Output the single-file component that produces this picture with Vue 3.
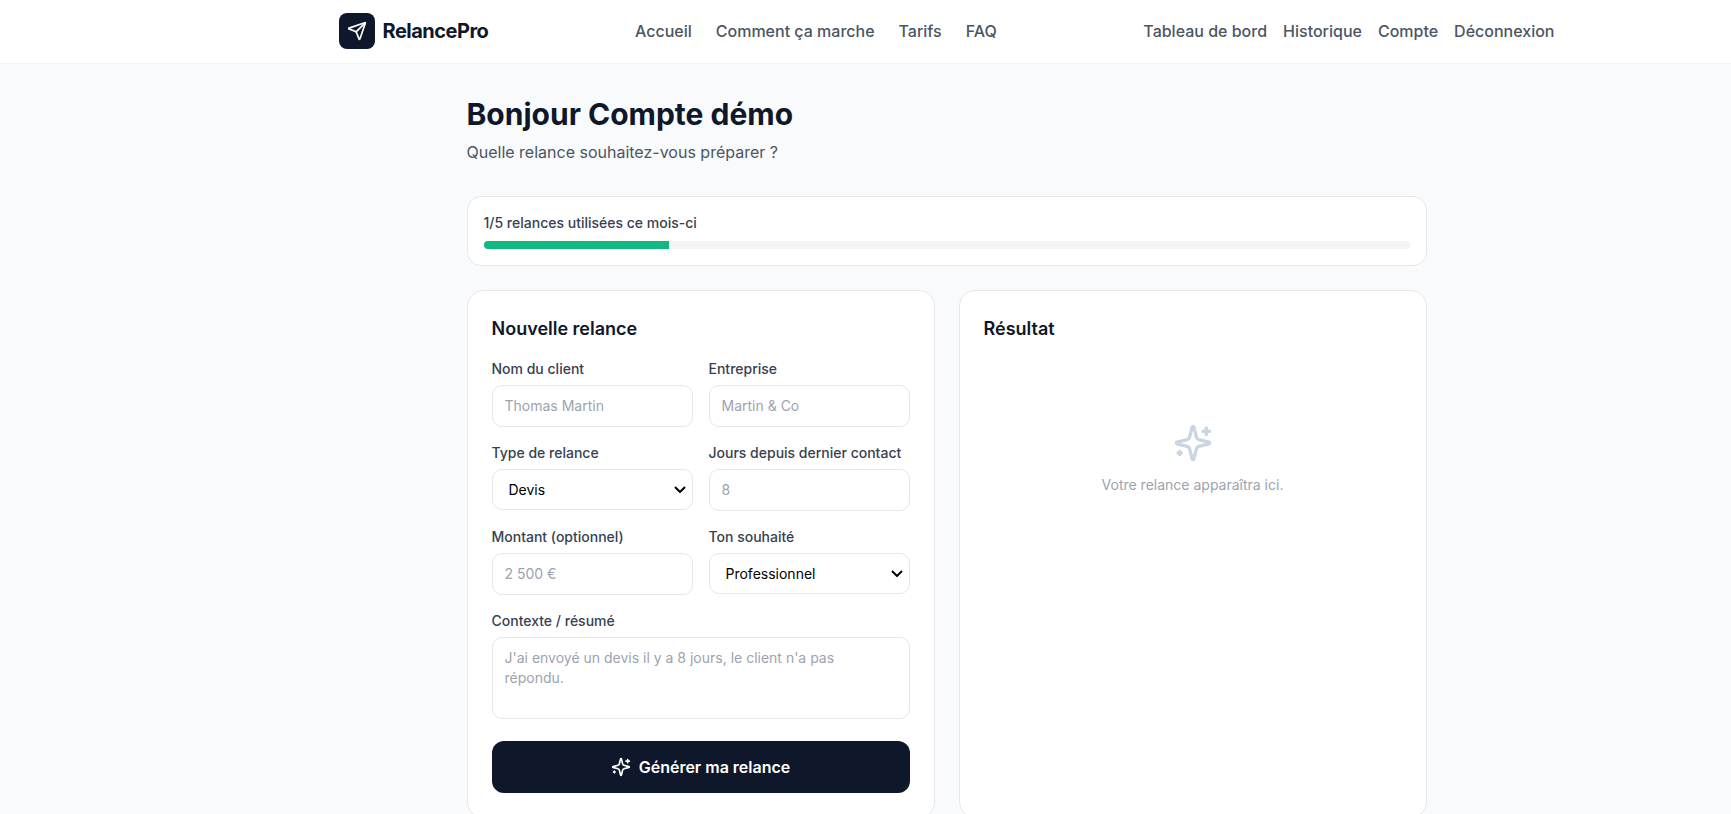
<template>
  <div class="page">
    <header class="topbar">
      <nav class="nav">
        <a class="brand" href="#">
          <span class="brand-icon">
            <svg viewBox="0 0 24 24" width="20" height="20" fill="none" stroke="#fff" stroke-width="2" stroke-linecap="round" stroke-linejoin="round">
              <path d="M14.536 21.686a.5.5 0 0 0 .937-.024l6.5-19a.496.496 0 0 0-.635-.635l-19 6.5a.5.5 0 0 0-.024.937l7.93 3.18a2 2 0 0 1 1.112 1.11z" />
              <path d="m21.854 2.147-10.94 10.939" />
            </svg>
          </span>
          <span class="brand-name">RelancePro</span>
        </a>
        <div class="links links-main">
          <a v-for="link in mainLinks" :key="link" href="#">{{ link }}</a>
        </div>
        <div class="links links-account">
          <a v-for="link in accountLinks" :key="link" href="#">{{ link }}</a>
        </div>
      </nav>
    </header>

    <main class="content">
      <h1>Bonjour Compte démo</h1>
      <p class="subtitle">Quelle relance souhaitez-vous préparer ?</p>

      <section class="usage">
        <div class="usage-label">{{ used }}/{{ quota }} relances utilisées ce mois-ci</div>
        <div class="usage-track">
          <div class="usage-fill" :style="{ width: usagePercent + '%' }"></div>
        </div>
      </section>

      <div class="columns">
        <section class="card">
          <h2>Nouvelle relance</h2>
          <form class="form" @submit.prevent>
            <div class="field">
              <label>Nom du client</label>
              <input type="text" placeholder="Thomas Martin" />
            </div>
            <div class="field">
              <label>Entreprise</label>
              <input type="text" placeholder="Martin &amp; Co" />
            </div>
            <div class="field">
              <label>Type de relance</label>
              <div class="select-wrap">
                <select>
                  <option>Devis</option>
                  <option>Facture</option>
                </select>
                <svg class="chevron" viewBox="0 0 12 7" width="12" height="7" fill="none" stroke="#000" stroke-width="2">
                  <path d="M1 1l5 5 5-5" />
                </svg>
              </div>
            </div>
            <div class="field">
              <label>Jours depuis dernier contact</label>
              <input type="text" placeholder="8" />
            </div>
            <div class="field">
              <label>Montant (optionnel)</label>
              <input type="text" placeholder="2 500 €" />
            </div>
            <div class="field">
              <label>Ton souhaité</label>
              <div class="select-wrap">
                <select>
                  <option>Professionnel</option>
                  <option>Amical</option>
                </select>
                <svg class="chevron" viewBox="0 0 12 7" width="12" height="7" fill="none" stroke="#000" stroke-width="2">
                  <path d="M1 1l5 5 5-5" />
                </svg>
              </div>
            </div>
            <div class="field field-wide">
              <label>Contexte / résumé</label>
              <textarea rows="3" placeholder="J'ai envoyé un devis il y a 8 jours, le client n'a pas répondu."></textarea>
            </div>
            <button class="submit" type="submit">
              <svg viewBox="0 0 24 24" width="20" height="20" fill="none" stroke="currentColor" stroke-width="2" stroke-linecap="round" stroke-linejoin="round">
                <path :d="sparkle" />
                <path d="M20 3v4M22 5h-4M4 17v2M5 18H3" />
              </svg>
              Générer ma relance
            </button>
          </form>
        </section>

        <section class="card">
          <h2>Résultat</h2>
          <div class="empty">
            <svg viewBox="0 0 24 24" width="40" height="40" fill="none" stroke="#cbd5e1" stroke-width="2" stroke-linecap="round" stroke-linejoin="round">
              <path :d="sparkle" />
              <path d="M20 3v4M22 5h-4M4 17v2M5 18H3" />
            </svg>
            <p>Votre relance apparaîtra ici.</p>
          </div>
        </section>
      </div>
    </main>
  </div>
</template>

<script setup>
import { computed } from 'vue';

const mainLinks = ['Accueil', 'Comment ça marche', 'Tarifs', 'FAQ'];
const accountLinks = ['Tableau de bord', 'Historique', 'Compte', 'Déconnexion'];

const used = 1;
const quota = 5;
const usagePercent = computed(() => (used / quota) * 100);

const sparkle = 'M9.937 15.5A2 2 0 0 0 8.5 14.063l-6.135-1.582a.5.5 0 0 1 0-.962L8.5 9.936A2 2 0 0 0 9.937 8.5l1.582-6.135a.5.5 0 0 1 .963 0L14.063 8.5A2 2 0 0 0 15.5 9.937l6.135 1.581a.5.5 0 0 1 0 .964L15.5 14.063a2 2 0 0 0-1.437 1.437l-1.582 6.135a.5.5 0 0 1-.963 0z';
</script>

<style>
html, body {
  height: 100%;
  overflow: hidden;
  background: #f9fafb;
}
</style>

<style scoped>
/* the page was captured wider than the window, so it keeps its own width */
.page {
  width: 1893px;
  font-family: Inter, "Liberation Sans", sans-serif;
  color: #0f172a;
}
.topbar {
  background: #fff;
  border-bottom: 1px solid #f3f4f6;
}
.nav {
  box-sizing: border-box;
  width: 1216px;
  height: 63px;
  padding-bottom: 1px;
  margin: 0 auto;
  display: flex;
  align-items: center;
  justify-content: space-between;
}
.brand {
  display: flex;
  align-items: center;
  gap: 8px;
  text-decoration: none;
  color: #0f172a;
}
.brand-icon {
  width: 36px;
  height: 36px;
  border-radius: 8px;
  background: #0f172a;
  display: flex;
  align-items: center;
  justify-content: center;
}
.brand-name {
  font-size: 20px;
  font-weight: 700;
  letter-spacing: -0.5px;
}
.links {
  display: flex;
  font-size: 16px;
  font-weight: 500;
  line-height: 24px;
}
.links a {
  color: #4b5563;
  text-decoration: none;
}
.links-main {
  gap: 24px;
}
.links-account {
  gap: 16px;
}
.content {
  width: 960px;
  margin: 0 auto;
  padding-top: 32px;
}
h1 {
  margin: 0;
  font-size: 30px;
  line-height: 36px;
  font-weight: 700;
}
.subtitle {
  margin: 8px 0 32px;
  font-size: 16px;
  line-height: 24px;
  font-weight: 400;
  color: #4b5563;
}
.usage {
  padding: 16px;
  background: #fff;
  border: 1px solid #e5e7eb;
  border-radius: 14px;
}
.usage-label {
  font-size: 14px;
  line-height: 20px;
  font-weight: 500;
  color: #374151;
}
.usage-track {
  height: 8px;
  margin-top: 8px;
  background: #f3f4f6;
  border-radius: 999px;
  overflow: hidden;
}
.usage-fill {
  height: 100%;
  background: #10b981;
}
.columns {
  display: grid;
  grid-template-columns: 1fr 1fr;
  gap: 24px;
  margin-top: 24px;
}
.card {
  padding: 24px;
  background: #fff;
  border: 1px solid #e5e7eb;
  border-radius: 16px;
}
h2 {
  margin: 0 0 16px;
  font-size: 18px;
  line-height: 28px;
  font-weight: 600;
}
.form {
  display: grid;
  grid-template-columns: 1fr 1fr;
  gap: 16px;
}
.field-wide,
.submit {
  grid-column: 1 / -1;
}
label {
  display: block;
  margin-bottom: 6px;
  font-size: 14px;
  line-height: 20px;
  font-weight: 500;
  color: #374151;
}
input,
select,
textarea {
  display: block;
  width: 100%;
  box-sizing: border-box;
  padding: 10px 12px;
  font-family: inherit;
  font-size: 14px;
  line-height: 20px;
  background: #fff;
  border: 1px solid #e5e7eb;
  border-radius: 10px;
  outline: none;
}
.select-wrap {
  position: relative;
}
select {
  height: 41px;
  padding-left: 16px;
  color: #000;
  appearance: none;
}
.chevron {
  position: absolute;
  top: 17px;
  right: 7px;
  pointer-events: none;
}
textarea {
  resize: none;
}
input::placeholder,
textarea::placeholder {
  color: #9ca3af;
}
.submit {
  height: 52px;
  margin-top: 6px;
  display: flex;
  align-items: center;
  justify-content: center;
  gap: 8px;
  font-family: inherit;
  font-size: 16px;
  font-weight: 600;
  color: #fff;
  background: #0f172a;
  border: none;
  border-radius: 12px;
}
.empty {
  padding-top: 64px;
  display: flex;
  flex-direction: column;
  align-items: center;
  color: #9ca3af;
}
.empty p {
  margin: 12px 0 0;
  font-size: 14px;
  line-height: 20px;
}
</style>
